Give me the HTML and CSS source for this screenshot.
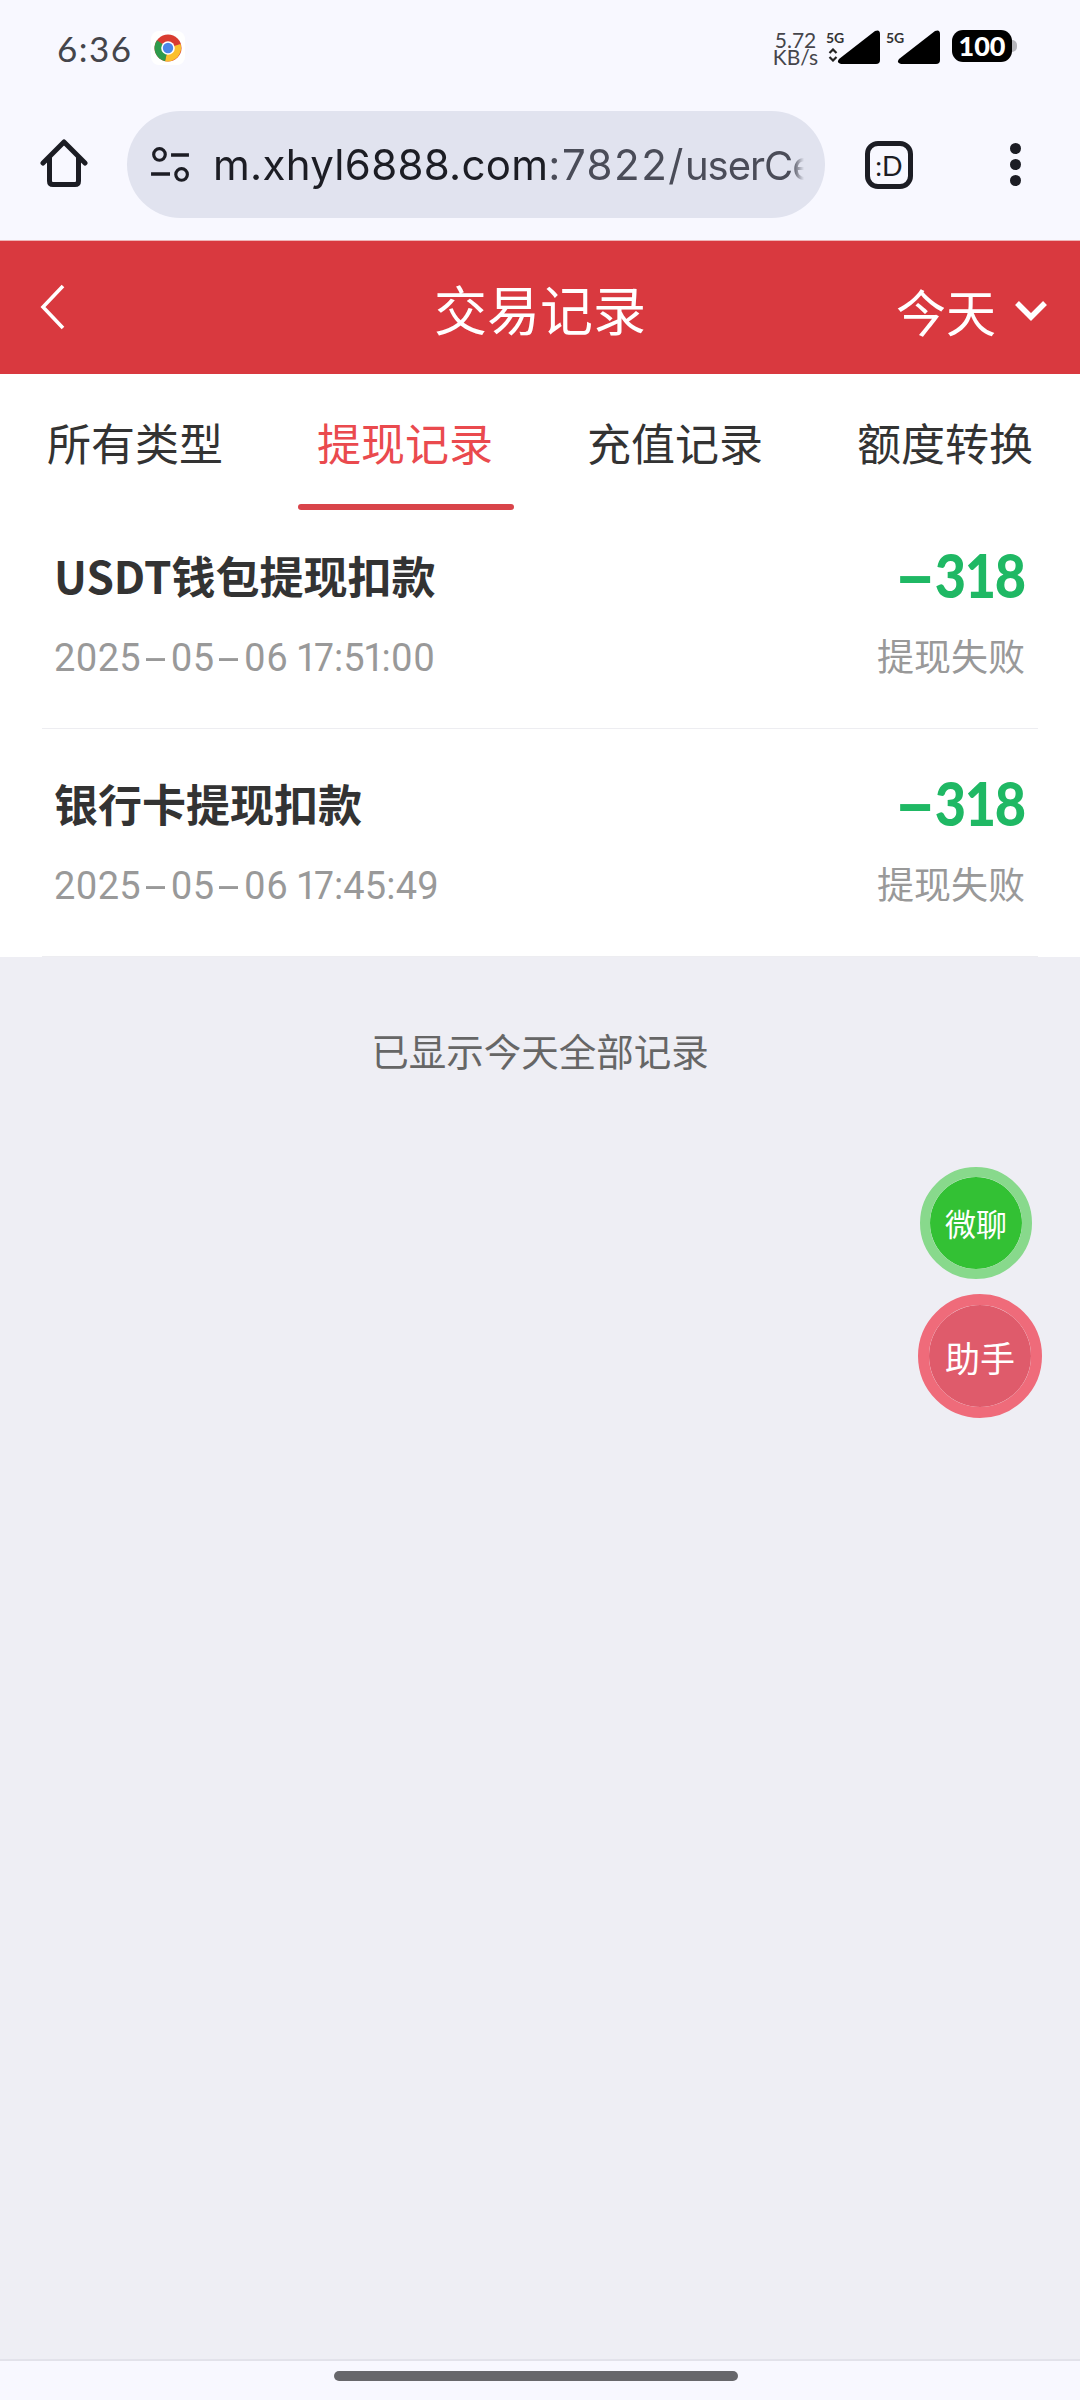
FILE: index.html
```html
<!DOCTYPE html>
<html lang="zh-CN">
<head>
    <meta charset="UTF-8">
    <meta name="viewport" content="width=device-width, initial-scale=1.0">
    <title>交易记录</title>
    <link rel="stylesheet" href="styles.css">
</head>
<body>
    <div class="phone">
        <div class="statusbar">
            <div class="status-left">
                <span class="clock">6:36</span>
                <span class="notif">
                    <svg width="28" height="28" viewBox="0 0 28 28">
                        <circle cx="14" cy="14" r="13.5" fill="#d93c30"/>
                        <path d="M14 14 L26.5 10 A13.5 13.5 0 0 1 11 27.2 Z" fill="#fbc02d"/>
                        <path d="M14 14 L11 27.2 A13.5 13.5 0 0 1 3 6.2 Z" fill="#2e9b4c"/>
                        <circle cx="14" cy="14" r="6.8" fill="#fff"/>
                        <circle cx="14" cy="14" r="5.2" fill="#4a86e8"/>
                    </svg>
                </span>
            </div>
            <div class="status-right">
                <div class="speed"><span>5.72</span><span>KB/s</span></div>
                <div class="sim">
                    <span class="sim-label">5G</span>
                    <svg class="updown" width="10" height="14" viewBox="0 0 10 14">
                        <path d="M1.5 5 L5 1.5 L8.5 5 M1.5 9 L5 12.5 L8.5 9" fill="none" stroke="#222" stroke-width="2.2"/>
                    </svg>
                    <svg class="signal" width="43" height="34" viewBox="0 0 43 34">
                        <path d="M2 29 L38 1 Q43 -1 43 4 V30 Q43 34 39 34 H4 Q-1 33 2 29 Z" fill="#000"/>
                    </svg>
                </div>
                <div class="sim">
                    <span class="sim-label">5G</span>
                    <svg class="signal" width="43" height="34" viewBox="0 0 43 34">
                        <path d="M2 29 L38 1 Q43 -1 43 4 V30 Q43 34 39 34 H4 Q-1 33 2 29 Z" fill="#000"/>
                    </svg>
                </div>
                <div class="battery"><span class="battery-level">100</span><span class="battery-tip"></span></div>
            </div>
        </div>

        <div class="toolbar">
            <svg class="home-icon" width="48" height="50" viewBox="0 0 48 50">
                <path d="M3 25 L24 4 L45 25 M9.5 20 V43 Q9.5 46.5 13 46.5 H35 Q38.5 46.5 38.5 43 V20" fill="none" stroke="#1c1d24" stroke-width="5" stroke-linecap="round" stroke-linejoin="round"/>
            </svg>
            <div class="omnibox">
                <svg class="tune-icon" width="40" height="36" viewBox="0 0 38 34">
                    <circle cx="9" cy="7" r="5.5" fill="none" stroke="#1c1d24" stroke-width="3"/>
                    <path d="M20 7.5 H37 M1 25.5 H19" stroke="#1c1d24" stroke-width="3.4"/>
                    <circle cx="30" cy="26" r="5.5" fill="none" stroke="#1c1d24" stroke-width="3"/>
                </svg>
                <div class="url"><span class="url-host">m.xhyl6888.com</span><span class="url-port">:7822/</span>userCe</div>
            </div>
            <div class="tab-count">:D</div>
            <div class="menu-dots"><i></i><i></i><i></i></div>
        </div>

        <div class="page-head">
            <svg class="back-icon" width="26" height="46" viewBox="0 0 26 46">
                <path d="M23 2 L3 23 L23 44" fill="none" stroke="#fff" stroke-width="3.6"/>
            </svg>
            <h1 class="page-title">交易记录</h1>
            <div class="range">
                今天
                <svg width="34" height="22" viewBox="0 0 34 22">
                    <path d="M3 4 L17 18 L31 4" fill="none" stroke="#fff" stroke-width="5.5"/>
                </svg>
            </div>
        </div>

        <div class="tabs">
            <div class="tab">所有类型</div>
            <div class="tab active">提现记录</div>
            <div class="tab">充值记录</div>
            <div class="tab">额度转换</div>
        </div>

        <div class="record-list">
            <div class="record">
                <div class="record-line">
                    <span class="record-title">USDT钱包提现扣款</span>
                    <span class="record-amount"><span class="dash">-</span>318</span>
                </div>
                <div class="record-line record-sub">
                    <span class="record-time">2025<span class="dash">-</span>05<span class="dash">-</span>06 17:51:00</span>
                    <span class="record-status">提现失败</span>
                </div>
            </div>
            <div class="record">
                <div class="record-line">
                    <span class="record-title">银行卡提现扣款</span>
                    <span class="record-amount"><span class="dash">-</span>318</span>
                </div>
                <div class="record-line record-sub">
                    <span class="record-time">2025<span class="dash">-</span>05<span class="dash">-</span>06 17:45:49</span>
                    <span class="record-status">提现失败</span>
                </div>
            </div>
        </div>

        <div class="page-body">
            <p class="end-note">已显示今天全部记录</p>
        </div>

        <div class="float-btn float-chat">微聊</div>
        <div class="float-btn float-help">助手</div>

        <div class="navbar"><span class="nav-pill"></span></div>
    </div>
</body>
</html>
```

FILE: styles.css
```css
* {
    box-sizing: border-box;
}

body {
    margin: 0;
    font-family: "Noto Sans CJK SC", "Noto Sans", sans-serif;
    background: #eeeef4;
}

.phone {
    position: relative;
    width: 1080px;
    height: 2400px;
    display: flex;
    flex-direction: column;
    overflow: hidden;
}

/* status bar */
.statusbar {
    height: 96px;
    background: #f8f8ff;
    display: flex;
    justify-content: space-between;
    align-items: flex-start;
    padding: 30px 63px 0 57px;
}

.status-left {
    display: flex;
    align-items: center;
    gap: 18px;
    height: 36px;
}

.clock {
    font-family: "Lato", sans-serif;
    font-size: 35px;
    line-height: 36px;
    color: #45454b;
    letter-spacing: 1.5px;
}

.notif {
    width: 34px;
    height: 34px;
    background: #fff;
    border-radius: 8px;
    display: flex;
    align-items: center;
    justify-content: center;
}

.status-right {
    display: flex;
    align-items: flex-start;
    height: 36px;
}

.speed {
    display: flex;
    flex-direction: column;
    align-items: center;
    font-family: "Lato", sans-serif;
    font-size: 21px;
    line-height: 17px;
    color: #45454b;
    width: 41px;
    margin-right: 10px;
    padding-top: 1px;
}

.sim {
    position: relative;
    width: 54px;
    height: 34px;
    margin-right: 6px;
    display: flex;
    justify-content: flex-end;
}

.sim-label {
    position: absolute;
    left: 0;
    top: 0;
    font-family: "Lato", sans-serif;
    font-weight: 700;
    font-size: 14px;
    line-height: 16px;
    color: #333;
}

.updown {
    position: absolute;
    left: 2px;
    top: 18px;
}

.battery {
    display: flex;
    align-items: center;
    margin-left: 6px;
}

.battery-level {
    width: 60px;
    height: 32px;
    background: #000;
    border-radius: 11px;
    color: #fff;
    font-family: "Lato", sans-serif;
    font-weight: 900;
    font-size: 27px;
    line-height: 32px;
    text-align: center;
}

.battery-tip {
    width: 5px;
    height: 12px;
    background: #b5b5bb;
    border-radius: 0 6px 6px 0;
}

/* browser toolbar */
.toolbar {
    height: 144px;
    background: #f8f8ff;
    display: flex;
    align-items: flex-start;
    padding: 15px 0 0 40px;
}

.home-icon {
    margin: 27px 0 0 0;
}

.omnibox {
    width: 698px;
    height: 107px;
    margin-left: 39px;
    background: #e1e3ef;
    border-radius: 54px;
    display: flex;
    align-items: center;
    padding: 0 21px 0 23px;
}

.tune-icon {
    flex: none;
}

.url {
    margin-left: 23px;
    font-family: "Inter", sans-serif;
    font-size: 40px;
    letter-spacing: -1px;
    color: #4a4c58;
    white-space: nowrap;
    overflow: hidden;
    flex: 1;
    -webkit-mask-image: linear-gradient(to right, #000 98%, transparent);
    mask-image: linear-gradient(to right, #000 98%, transparent);
}

.url-host {
    font-size: 42px;
    letter-spacing: 0.3px;
    color: #1c1d24;
}

.url-port {
    font-size: 42px;
    letter-spacing: 1.5px;
}

.tab-count {
    width: 48px;
    height: 48px;
    margin: 30px 0 0 40px;
    border: 5px solid #1c1d24;
    border-radius: 13px;
    display: flex;
    align-items: center;
    justify-content: center;
    font-family: "Lato", sans-serif;
    font-size: 27px;
    color: #1c1d24;
}

.menu-dots {
    display: flex;
    flex-direction: column;
    gap: 5px;
    margin: 32px 0 0 97px;
}

.menu-dots i {
    display: block;
    width: 11px;
    height: 11px;
    border-radius: 50%;
    background: #1c1d24;
}

/* red header */
.page-head {
    position: relative;
    height: 134px;
    background: #d9393f;
    border-top: 1px solid #eeb4b6;
    display: flex;
    align-items: center;
    justify-content: center;
}

.back-icon {
    position: absolute;
    left: 40px;
    top: 43px;
}

.page-title {
    margin: 0;
    font-size: 53px;
    font-weight: 400;
    color: #fff;
    line-height: 132px;
}

.range {
    position: absolute;
    right: 32px;
    top: 0;
    height: 132px;
    display: flex;
    align-items: center;
    gap: 18px;
    font-size: 50px;
    color: #fff;
    padding-top: 6px;
}

/* tabs */
.tabs {
    display: flex;
    height: 127px;
    background: #fff;
}

.tab {
    position: relative;
    flex: 1;
    text-align: center;
    font-size: 44px;
    line-height: 137px;
    color: #333;
}

.tab.active {
    color: #ea4a4e;
}

.tab.active::after {
    content: "";
    position: absolute;
    left: 28px;
    right: 26px;
    bottom: -9px;
    height: 6px;
    border-radius: 3px;
    background: #d9444a;
}

/* records */
.record-list {
    background: #fff;
}

.record {
    height: 228px;
    margin: 0 42px;
    padding: 37px 13px 0 12px;
    border-bottom: 1px solid #ededf1;
}

.record-line {
    display: flex;
    justify-content: space-between;
    align-items: center;
    height: 74px;
}

.record-sub {
    margin-top: 9px;
}

.record-title {
    font-size: 44px;
    font-weight: 700;
    color: #333;
}

.record-amount {
    display: inline-block;
    font-family: "Lato", sans-serif;
    font-size: 60px;
    font-weight: 900;
    letter-spacing: -1.5px;
    color: #1fb864;
    transform: scaleX(0.9);
    transform-origin: right center;
}

.dash {
    display: inline-block;
    width: 0.78em;
    text-align: center;
    transform: scaleX(2.1);
}

.record-time {
    font-family: "Roboto", sans-serif;
    font-size: 38px;
    letter-spacing: 0.15px;
    font-feature-settings: "pnum";
    color: #999;
}

.record-status {
    font-size: 37px;
    color: #999;
    margin-bottom: 6px;
}

.page-body {
    flex: 1;
}

.end-note {
    margin: 65px 0 0;
    text-align: center;
    font-size: 37.5px;
    line-height: 56px;
    color: #666;
}

/* floating buttons */
.float-btn {
    position: absolute;
    border-radius: 50%;
    display: flex;
    align-items: center;
    justify-content: center;
    color: #fff;
}

.float-chat {
    left: 920px;
    top: 1167px;
    width: 112px;
    height: 112px;
    background: #33c134;
    border: 10px solid #88d98c;
    background-clip: padding-box;
    font-size: 31px;
    padding-bottom: 2px;
}

.float-help {
    left: 918px;
    top: 1294px;
    width: 124px;
    height: 124px;
    background: #df5b6b;
    border: 11px solid #ef6b7a;
    background-clip: padding-box;
    font-size: 35px;
}

/* gesture bar */
.navbar {
    height: 41px;
    background: #f8f8ff;
    border-top: 2px solid #e2e2ea;
    display: flex;
    justify-content: center;
    padding: 10px 8px 0 0;
}

.nav-pill {
    width: 404px;
    height: 10px;
    border-radius: 5px;
    background: #67676b;
}
```
